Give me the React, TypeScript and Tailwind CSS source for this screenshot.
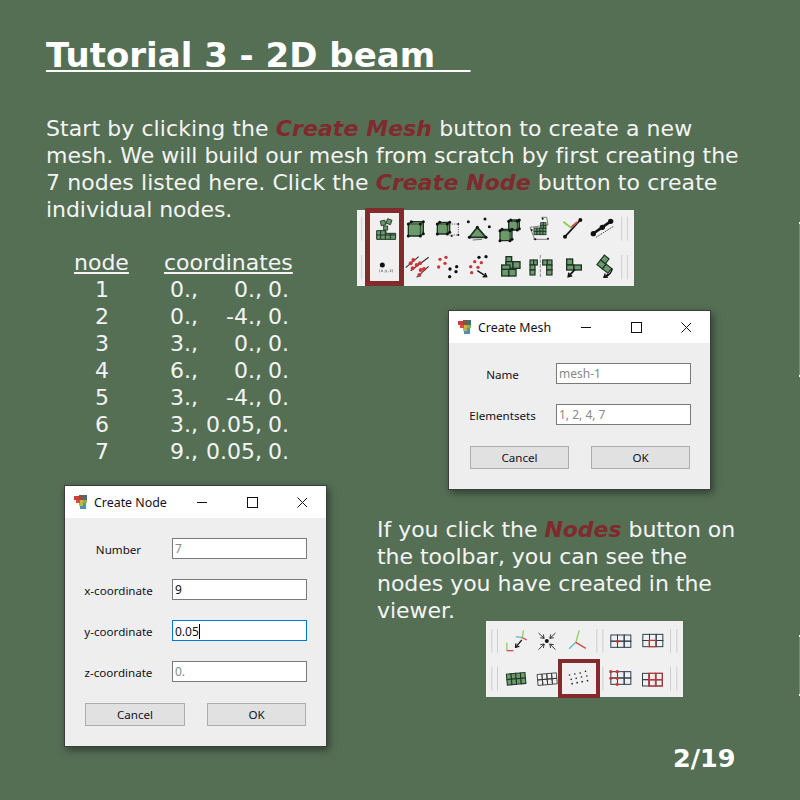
const DARK = '#1d3328';
const GREEN = '#6c9a68';
const RED = '#c9373a';

const Dots = ({ pts, r = 4, fill = '#111' }: { pts: number[][]; r?: number; fill?: string }) => (
  <>
    {pts.map(([x, y], i) => (
      <circle key={i} cx={x} cy={y} r={r} fill={fill} />
    ))}
  </>
);

// block of mesh cells, coords are in the 3x space of the toolbar picture
const Cells = ({ x, y, w, h, cols, rows, fill = GREEN, stroke = DARK, sw = 2.5 }: { x: number; y: number; w: number; h: number; cols: number; rows: number; fill?: string; stroke?: string; sw?: number }) => {
  const cw = w / cols;
  const ch = h / rows;
  return (
    <g stroke={stroke} strokeWidth={sw} fill={fill}>
      {Array.from({ length: cols * rows }, (_, i) => (
        <rect key={i} x={x + (i % cols) * cw} y={y + Math.floor(i / cols) * ch} width={cw} height={ch} />
      ))}
    </g>
  );
};

const Seps = ({ xs, ys }: { xs: number[]; ys: number[][] }) => (
  <g stroke="#cfcfcf" strokeWidth={3}>
    {xs.map((x) => ys.map(([a, b]) => <line key={`${x}-${a}`} x1={x} x2={x} y1={a} y2={b} />))}
  </g>
);

const Arrow = ({ x1, y1, x2, y2, sw = 4 }: { x1: number; y1: number; x2: number; y2: number; sw?: number }) => {
  const a = Math.atan2(y2 - y1, x2 - x1);
  const l = 12;
  const p = (d: number) => `${x2 - l * Math.cos(a + d)},${y2 - l * Math.sin(a + d)}`;
  return (
    <g stroke="#111" strokeWidth={sw} fill="none">
      <line x1={x1} y1={y1} x2={x2} y2={y2} />
      <polyline points={`${p(0.6)} ${x2},${y2} ${p(-0.6)}`} />
    </g>
  );
};

const Cube = ({ x, y, s, dx = 9, dy = 7 }: { x: number; y: number; s: number; dx?: number; dy?: number }) => (
  <g>
    <path d={`M${x} ${y} l${dx} ${-dy} h${s} v${s} l${-dx} ${dy} h${-s} z`} fill={GREEN} stroke={DARK} strokeWidth={4} />
    <path d={`M${x} ${y} h${s} v${s} M${x + s} ${y} l${dx} ${-dy}`} fill="none" stroke={DARK} strokeWidth={2.5} />
    <Dots pts={[[x, y], [x + s, y], [x + dx + s, y - dy], [x + dx, y - dy], [x, y + s], [x + s, y + s], [x + s + dx, y + s - dy]]} r={4.5} />
  </g>
);

const ToolbarOne = () => (
  <svg width={277} height={76} viewBox="21 30 831 228" className="blur-[0.3px]">
    <Seps xs={[35, 815, 832]} ys={[[50, 122], [165, 238]]} />

    {/* create mesh */}
    <path d="M80 92 H108 V100 H137 V118 H80 Z" fill={GREEN} />
    <path d="M80 92 H108 V100 H137 V118 H80 Z M80 105 H137 M92 92 V118 M106 92 V118 M121 100 V118" fill="none" stroke={DARK} strokeWidth={3} />
    <rect x={92} y={62} width={14} height={14} fill={GREEN} stroke={DARK} strokeWidth={2.5} transform="rotate(-12 98 68)" />
    <rect x={110} y={58} width={14} height={14} fill={GREEN} stroke={DARK} strokeWidth={2.5} transform="rotate(20 117 65)" />
    <rect x={101} y={78} width={12} height={12} fill={GREEN} stroke={DARK} strokeWidth={2.5} />

    <Cube x={175} y={72} s={36} />

    <Cube x={262} y={72} s={30} dx={7} dy={5} />
    <path d="M298 72 H325 V105 H298" fill="none" stroke="#555" strokeWidth={2.5} strokeDasharray="4 3" />
    <Dots pts={[[325, 72], [325, 105], [305, 108]]} r={3} />

    <path d="M382 82 L358 112 H408 Z" fill={GREEN} stroke={DARK} strokeWidth={5} strokeLinejoin="round" />
    <Dots pts={[[355, 65], [405, 57], [418, 80], [382, 82], [358, 112], [408, 112]]} r={4.5} />
    <path d="M368 120 L396 118" stroke="#555" strokeWidth={2.5} />

    <Cube x={476} y={64} s={26} dx={6} dy={4} />
    <Cube x={450} y={92} s={30} dx={6} dy={4} />

    {/* mesh inside a box */}
    <path d="M540 82 L594 75 L590 52 L574 52 M550 118 L592 118" fill="none" stroke="#666" strokeWidth={2.5} />
    <path d="M540 82 L555 120" fill="none" stroke="#666" strokeWidth={2.5} />
    <Cells x={552} y={84} w={36} h={20} cols={4} rows={2} />
    <Cells x={572} y={68} w={16} h={16} cols={2} rows={2} />
    <Dots pts={[[545, 90], [556, 118], [594, 116], [578, 56]]} r={3} />

    <line x1={645} y1={110} x2={691} y2={60} stroke="#111" strokeWidth={5} />
    <line x1={640} y1={65} x2={664} y2={84} stroke="#8fd05a" strokeWidth={6} />
    <line x1={664} y1={82} x2={682} y2={66} stroke="#c9504a" strokeWidth={6} />
    <Dots pts={[[645, 110], [691, 60]]} r={6} />

    <line x1={728} y1={102} x2={782} y2={64} stroke="#111" strokeWidth={8} />
    <Dots pts={[[730, 101], [757, 82], [782, 64]]} r={8} />
    <line x1={738} y1={112} x2={792} y2={78} stroke="#444" strokeWidth={3} strokeDasharray="5 3" />

    {/* create node */}
    <circle cx={97} cy={195} r={7.5} fill="#111" />
    <text x={109} y={216} fontSize={12} textAnchor="middle" fill="#333" fontFamily="'DejaVu Sans', sans-serif" letterSpacing={1}>
      (x,y,z)
    </text>

    <g stroke="#333" strokeWidth={3.5}>
      <line x1={167} y1={203} x2={206} y2={170} />
      <line x1={182} y1={212} x2={236} y2={172} />
      <line x1={200} y1={232} x2={236} y2={199} />
    </g>
    <Dots pts={[[182, 190], [190, 180], [200, 195], [210, 190], [188, 205], [212, 210], [222, 207], [208, 225]]} r={6} fill={RED} />

    <Dots pts={[[270, 178], [288, 172], [285, 190], [266, 201]]} r={5} fill={RED} />
    <Dots pts={[[300, 207], [320, 200], [318, 215], [299, 230]]} r={5} />

    <Dots pts={[[387, 172], [408, 170]]} r={5} />
    <Dots pts={[[374, 185], [394, 188], [362, 200], [384, 202], [365, 218]]} r={5} fill={RED} />
    <Arrow x1={382} y1={212} x2={410} y2={230} />

    <Cells x={468} y={170} w={17} h={20} cols={1} rows={1} sw={4} />
    <Cells x={468} y={185} w={42} h={20} cols={2} rows={1} sw={4} />
    <Cells x={455} y={195} w={25} h={16} cols={1} rows={1} sw={4} />
    <Cells x={455} y={208} w={43} h={20} cols={2} rows={1} sw={4} />

    <Cells x={540} y={180} w={22} h={15} cols={2} rows={1} sw={3.5} />
    <Cells x={540} y={195} w={15} h={30} cols={1} rows={2} sw={3.5} />
    <Cells x={578} y={180} w={28} h={15} cols={2} rows={1} sw={3.5} />
    <Cells x={590} y={195} w={16} h={30} cols={1} rows={2} sw={3.5} />
    <line x1={571} y1={165} x2={571} y2={232} stroke="#777" strokeWidth={2.5} strokeDasharray="10 4" />

    <Cells x={650} y={177} w={18} h={18} cols={1} rows={1} sw={4} />
    <Cells x={650} y={195} w={44} h={15} cols={2} rows={1} sw={4} />
    <Arrow x1={675} y1={208} x2={655} y2={230} sw={5} />

    <g transform="rotate(38 760 205)">
      <Cells x={738} y={190} w={42} h={18} cols={2} rows={1} sw={3.5} />
      <Cells x={738} y={172} w={18} h={18} cols={1} rows={1} sw={3.5} />
    </g>
    <path d="M787 205 Q785 222 764 232" fill="none" stroke="#111" strokeWidth={4} />
    <Arrow x1={775} y1={222} x2={762} y2={232} sw={4} />
  </svg>
);

const ToolbarTwo = () => (
  <svg width={197} height={76} viewBox="18 18 590 228" className="blur-[0.3px]">
    <Seps xs={[35, 52, 350, 368, 571, 590]} ys={[[42, 113], [155, 227]]} />

    <g strokeWidth={4} fill="none">
      <path d="M80 107 V83" stroke="#8fd05a" />
      <path d="M80 107 H100" stroke="#d0504a" />
      <path d="M126 68 L130 46" stroke="#8fd05a" />
      <path d="M126 68 L107 65" stroke="#5cb8d8" />
      <path d="M126 68 L140 75" stroke="#d0504a" />
    </g>
    <Arrow x1={125} y1={75} x2={106} y2={97} sw={3.5} />

    <circle cx={200} cy={78} r={6} fill="#111" />
    <Arrow x1={175} y1={54} x2={192} y2={70} sw={2.5} />
    <Arrow x1={226} y1={54} x2={209} y2={70} sw={2.5} />
    <Arrow x1={175} y1={104} x2={192} y2={87} sw={2.5} />
    <Arrow x1={226} y1={104} x2={209} y2={87} sw={2.5} />

    <g strokeWidth={4} fill="none">
      <path d="M287 82 L297 46" stroke="#8fd05a" />
      <path d="M287 82 L267 101" stroke="#5cb8d8" />
      <path d="M287 82 L317 100" stroke="#c84a48" />
    </g>

    <Cells x={392} y={60} w={60} h={37} cols={3} rows={2} fill="none" stroke="#2c3e50" sw={3} />
    <circle cx={412} cy={79} r={5} fill={RED} />

    <Cells x={488} y={58} w={60} h={37} cols={3} rows={2} fill="none" stroke="#2c3e50" sw={3} />
    <rect x={507} y={76} width={20} height={19} fill="none" stroke={RED} strokeWidth={3.5} />

    <g transform="rotate(-5 107 192)">
      <Cells x={80} y={175} w={56} h={33} cols={4} rows={2} sw={3} />
    </g>
    <g transform="rotate(-5 200 192)">
      <Cells x={172} y={176} w={58} h={33} cols={4} rows={2} fill="none" stroke="#333" sw={2.5} />
    </g>

    <Dots pts={[[268, 180], [284, 177], [300, 174], [316, 169], [273, 193], [288, 190], [304, 186], [320, 183], [276, 206], [291, 203], [306, 200], [322, 197]]} r={2.5} fill="#222" />

    <Cells x={392} y={170} w={60} h={38} cols={3} rows={2} fill="none" stroke="#2c3e50" sw={3} />
    <Dots pts={[[392, 170], [411, 170], [392, 190], [411, 190], [411, 208]]} r={5} fill={RED} />

    <Cells x={487} y={175} w={60} h={38} cols={3} rows={2} fill="none" stroke="#2c3e50" sw={3} />
    <Cells x={506} y={175} w={40} h={38} cols={2} rows={2} fill="none" stroke={RED} sw={3.5} />
  </svg>
);

const AppIcon = () => (
  <svg width={13} height={15} viewBox="0 0 13 15" className="shrink-0">
    <rect x={0} y={1} width={5} height={4} fill="#c9403a" />
    <rect x={5} y={0} width={4} height={5} fill="#7a5a3a" />
    <rect x={9} y={0} width={4} height={5} fill="#4a6a78" />
    <rect x={2} y={5} width={4} height={3} fill="#d8503a" />
    <rect x={6} y={5} width={3} height={3} fill="#d8b040" />
    <rect x={9} y={5} width={4} height={3} fill="#8ab050" />
    <rect x={5} y={8} width={4} height={3} fill="#b8b848" />
    <rect x={9} y={8} width={3} height={3} fill="#50a070" />
    <rect x={6} y={11} width={6} height={3} fill="#4a90b8" />
  </svg>
);

const Field = ({ label, value, muted = true, active = false }: { label: string; value: string; muted?: boolean; active?: boolean }) => (
  <div className="grid grid-cols-[107px_135px] items-center">
    <span className="translate-y-px text-center">{label}</span>
    <div className={`h-[21px] border bg-white px-[2px] text-[12px] leading-[19px] ${active ? 'border-[#0078d7]' : 'border-[#7a7a7a]'} ${muted ? 'text-[#888888]' : 'text-[#111111]'}`}>
      {value}
      {active && <span className="inline-block h-[15px] w-px translate-y-[3px] bg-black" />}
    </div>
  </div>
);

const Dialog = ({ title, children }: { title: string; children: React.ReactNode }) => (
  <div className="w-[263px] border border-[#3a3f3a] bg-[#eeeeee] font-['Noto_Sans',sans-serif] text-[11.6px] leading-[21px] text-[#111122] shadow-[2px_3px_8px_rgba(0,0,0,0.45)]">
    <div className="flex h-[32px] items-center bg-white pl-[9px]">
      <AppIcon />
      <span className="ml-[7px] w-[100px] text-[12.4px]">{title}</span>
      <svg width={110} height={16} viewBox="0 0 110 16" className="ml-auto mr-[19px]" stroke="#111" fill="none">
        <path d="M0 8.5 H10" />
        <rect x={50.5} y={3.5} width={10} height={10} />
        <path d="M100.5 3.5 L110.5 13.5 M110.5 3.5 L100.5 13.5" />
      </svg>
    </div>
    <div className="flex flex-col gap-5 pb-[20px] pt-5">{children}</div>
  </div>
);

const Buttons = ({ narrow = false }: { narrow?: boolean }) => (
  <div className={`mt-px flex gap-[22px] ${narrow ? 'ml-[21px]' : 'ml-[20px]'}`}>
    <button className={`h-[23px] border border-[#adadad] bg-[#e1e1e1] text-center ${narrow ? 'w-[99px]' : 'w-[100px]'}`}>Cancel</button>
    <button className="h-[23px] w-[99px] border border-[#adadad] bg-[#e1e1e1] text-center">OK</button>
  </div>
);

const nodes = [
  ['1', '0.,', '0.,', '0.'],
  ['2', '0.,', '-4.,', '0.'],
  ['3', '3.,', '0.,', '0.'],
  ['4', '6.,', '0.,', '0.'],
  ['5', '3.,', '-4.,', '0.'],
  ['6', '3.,', '0.05,', '0.'],
  ['7', '9.,', '0.05,', '0.'],
];

const Accent = ({ children }: { children: React.ReactNode }) => <b className="italic text-[#802a2d]">{children}</b>;

export default function App() {
  return (
    <div className="relative flex h-[800px] w-[800px] flex-col overflow-hidden bg-[#556f55] pl-[46px] pt-[33px] font-['DejaVu_Sans',sans-serif] text-[22px] leading-[27px] text-[#f4f4f4]">
      <h1 className="whitespace-pre text-[34px] font-bold leading-[44px] text-white underline decoration-2 underline-offset-[3px]">
        {'Tutorial 3 - 2D beam\u00a0\u00a0\u00a0'}
      </h1>
      <p className="mt-[38px]">
        <span className="tracking-[0.08px]">
          Start by clicking the <Accent>Create Mesh</Accent> button to create a new
        </span>
        <br />
        <span className="tracking-[-0.02px]">mesh. We will build our mesh from scratch by first creating the</span>
        <br />
        <span className="tracking-[0.08px]">
          7 nodes listed here. Click the <Accent>Create Node</Accent> button to create
        </span>
        <br />
        <span className="tracking-[-0.05px]">individual nodes.</span>
      </p>

      <div className="flex">
        <div className="w-[311px] shrink-0">
          <div className="ml-[28px] mt-[26px]">
            <div className="flex">
              <span className="w-[54px] text-center underline">node</span>
              <span className="ml-[36px] underline">coordinates</span>
            </div>
            {nodes.map(([n, x, y, z]) => (
              <div key={n} className="flex">
                <span className="ml-px w-[54px] text-center">{n}</span>
                <span className="ml-[41px] w-[35px]">{x}</span>
                <span className="w-[57px] text-right">{y}</span>
                <span className="ml-[6px]">{z}</span>
              </div>
            ))}
          </div>
          <div className="ml-[18px] mt-[20px]">
            <Dialog title="Create Node">
              <Field label="Number" value="7" />
              <Field label="x-coordinate" value="9" muted={false} />
              <Field label="y-coordinate" value="0.05" muted={false} active />
              <Field label="z-coordinate" value="0." />
              <Buttons />
            </Dialog>
          </div>
        </div>

        <div className="-mt-[15px] flex flex-col">
          <div className="relative mt-[2px] h-[76px] w-[277px] bg-[#f0f0f0]">
            <ToolbarOne />
            <div className="absolute -top-[2px] left-[8px] h-[78px] w-[39px] border-[5px] border-[#822a2c]" />
          </div>
          <div className="ml-[91px] mt-[24px]">
            <Dialog title="Create Mesh">
              <Field label="Name" value="mesh-1" />
              <Field label="Elementsets" value="1, 2, 4, 7" />
              <Buttons narrow />
            </Dialog>
          </div>
          <p className="ml-[20px] mt-[26px] tracking-[-0.03px]">
            If you click the <Accent>Nodes</Accent> button on
            <br />
            the toolbar, you can see the
            <br />
            nodes you have created in the
            <br />
            viewer.
          </p>
          <div className="relative ml-[129px] mt-[-3px] h-[76px] w-[197px] bg-[#f0f0f0]">
            <ToolbarTwo />
            <div className="absolute left-[72px] top-[38px] h-[39px] w-[42px] border-4 border-[#822a2c]" />
          </div>
          <div className="ml-[316px] mt-[45px] text-[25.5px] font-bold leading-[32px] text-white">2/19</div>
        </div>
      </div>

      {/* stray edge of the slide behind, right border */}
      <div className="absolute right-0 top-[222px] h-[155px] w-px border-y-2 border-white bg-white/20" />
      <div className="absolute right-0 top-[635px] h-[61px] w-px border-y-2 border-white bg-white/20" />
    </div>
  );
}
